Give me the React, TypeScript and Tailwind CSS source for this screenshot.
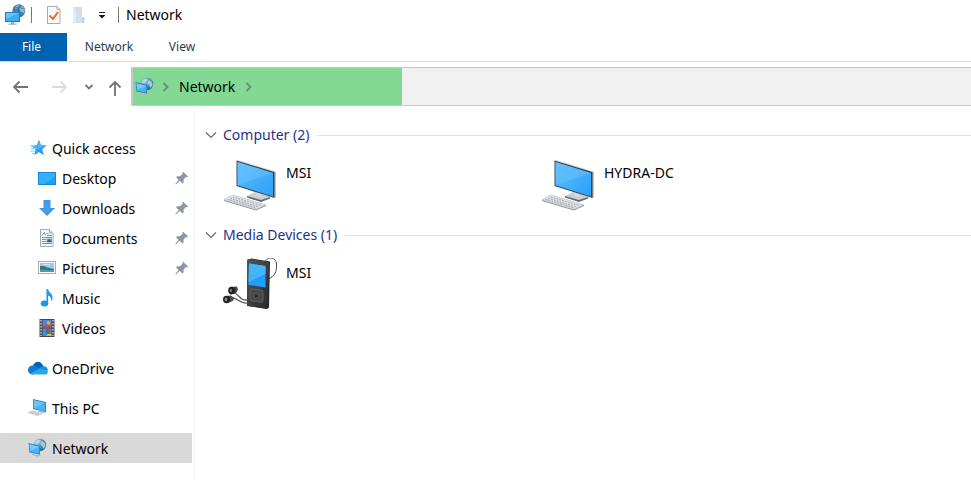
import type { ReactNode } from "react";

function NetworkIcon({ className }: { className: string }) {
  return (
    <svg viewBox="0 0 20 20" className={className} aria-hidden="true">
      <defs>
        <radialGradient id="globe" cx="0.35" cy="0.25" r="0.8">
          <stop offset="0" stopColor="#a9cfe0" />
          <stop offset="0.5" stopColor="#4f92b8" />
          <stop offset="1" stopColor="#2a668f" />
        </radialGradient>
      </defs>
      <circle cx="12" cy="7" r="6.200" fill="url(#globe)" />
      <path d="M7 4l3-2.500 3 1-2 2-2 2-3-.5zM14 3l3 2 .6 3-2 3-1.500-3-1.600-1.500z" fill="#c0e0e9" opacity="0.75" />
      <path d="M5 16l4 1 3-1 1.500 1-4 1.700-6-2z" fill="#b0b8bd" />
      <path d="M.500 5l11.500 3v8.500L1.500 14.500z" fill="#2f7fae" />
      <path d="M1.400 6.200l9.800 2.600v6.700L2.300 13.700z" fill="#45b5fb" />
      <path d="M1.400 6.200l9.800 2.600L2.200 12.700z" fill="#75cbff" />
    </svg>
  );
}

function TitleNetworkIcon() {
  return (
    <svg viewBox="0 0 22 22" className="h-[22px] w-[22px]" aria-hidden="true">
      <circle cx="14.800" cy="6.800" r="6.500" fill="#3f7fa8" />
      <path d="M10 4l3-3 3 0-1 2-3 2zM16 3l3-1 2 4-1 3-3-1-2-3z" fill="#86bdd5" />
      <path d="M9 4q5-2 11.500 1M15 .500v13" stroke="#2c638a" strokeWidth="0.600" fill="none" />
      <rect x="1" y="8" width="15" height="10" fill="#287fb0" />
      <rect x="2" y="9" width="13" height="8" fill="#3aaef2" />
      <path d="M2 9h13L2 15z" fill="#67c5fa" />
      <path d="M7 18h3v1.500h2.500v1.200h-8v-1.200H7z" fill="#8eb4c8" />
    </svg>
  );
}

function CheckDocIcon() {
  return (
    <svg viewBox="0 0 16 20" className="h-5 w-4" aria-hidden="true">
      <path d="M1.500 1.500h9.500l3 3v14h-12.500z" fill="#fafafa" stroke="#a9a9a9" />
      <path d="M11 1.500v3h3" fill="none" stroke="#a9a9a9" />
      <path d="M3.500 10.500l3.500 3.500 5-7" fill="none" stroke="#f26522" strokeWidth="2" />
    </svg>
  );
}

function FolderIcon() {
  return (
    <svg viewBox="0 0 14 18" className="h-[18px] w-[14px]" aria-hidden="true">
      <path d="M1 1h9v10l2 1v5H1z" fill="#d3deed" />
      <path d="M1 1l3 3v13l-3-1z" fill="#e2eaf4" />
      <path d="M10 11h2.500v6H10z" fill="#c5d4e8" />
    </svg>
  );
}

function StarIcon() {
  return (
    <svg viewBox="0 0 18 18" className="h-[18px] w-[18px]" aria-hidden="true">
      <path d="M10 1l2 5.200 5.500.4-4.200 3.700 1.400 6-4.700-3.200-4.800 3.200 1.500-5.700L2 6.700l5.800-.4z" fill="#2d9be8" />
      <path d="M10 1l2 5.200 5.500.4L7 11 3 7l4.800-.7z" fill="#48b2f5" />
      <path d="M1 7h5M2 9.500h5M1 12h5M3 14.500h2" stroke="#8acdf6" />
    </svg>
  );
}

function DesktopIcon() {
  return (
    <svg viewBox="0 0 20 16" className="h-4 w-5" aria-hidden="true">
      <rect x="1" y="2" width="18" height="13" fill="#1684d8" />
      <rect x="2" y="3" width="16" height="11" fill="#16a0fb" />
      <path d="M18 3v4L7 14H2V3z" fill="#36afff" />
    </svg>
  );
}

function DownloadIcon() {
  return (
    <svg viewBox="0 0 18 18" className="h-[18px] w-[18px]" aria-hidden="true">
      <path d="M5.500 1h7v8H17l-8 8-8-8h4.500z" fill="#3c91e2" />
      <path d="M6 1.500h6v8h3.500L9 16 2.500 9.500H6z" fill="#449be8" />
    </svg>
  );
}

function DocumentIcon() {
  return (
    <svg viewBox="0 0 16 18" className="h-[18px] w-4" aria-hidden="true">
      <path d="M1.500.500h9l3.500 3.500v13.500H1.500z" fill="#f8fbfd" stroke="#9eabb5" />
      <path d="M10.500.500v3.500H14" fill="#d9e5ec" stroke="#9eabb5" />
      <path d="M3 6.500L5.500 3.500 6.500 6.500M7.500 4.500h2M8 6.500h5M3 8.500h10M3 10.500h4M3 12.500h4M3 14.500h10" fill="none" stroke="#4ba3ce" />
      <rect x="7.500" y="9.500" width="5.500" height="4" fill="#5fa4cf" />
      <path d="M8 13l2-3 3 3z" fill="#315f7e" />
    </svg>
  );
}

function PictureIcon() {
  return (
    <svg viewBox="0 0 20 16" className="h-4 w-5" aria-hidden="true">
      <rect x="1.500" y="1.500" width="17" height="12" fill="#fff" stroke="#a6acb0" />
      <rect x="3" y="3" width="14" height="9" fill="#8ecdf5" />
      <path d="M3 6l4 0 3 1.500 7 1.500v1.500H3z" fill="#41765e" />
      <path d="M3 9.500l7 .5h7v2H3z" fill="#4a96cd" />
      <path d="M6 4.500h7" stroke="#d8effb" />
    </svg>
  );
}

function MusicIcon() {
  return (
    <svg viewBox="0 0 16 20" className="h-5 w-4" aria-hidden="true">
      <ellipse cx="5.500" cy="15.500" rx="3.800" ry="3" fill="#1298f6" />
      <path d="M7.500 1h1.600c.3 3.500 4.900 4.500 4.400 9-.2 1.300-.7 2.300-1.700 3.500.7-3.500 0-5-2.700-6V15.500H7.500z" fill="#1298f6" />
    </svg>
  );
}

function VideoIcon() {
  return (
    <svg viewBox="0 0 16 18" className="h-[18px] w-4" aria-hidden="true">
      <rect x="0.500" width="15" height="18" fill="#45494c" />
      <path d="M2 1v16M14 1v16" stroke="#e3e3e3" strokeWidth="1.200" strokeDasharray="1.500 1.500" />
      <rect x="3.500" y="1" width="9" height="7.500" fill="#4f87d9" />
      <rect x="3.500" y="9.500" width="9" height="7.500" fill="#438ce0" />
      <path d="M3.500 7.500l3-2.500 2 1 4-2v3l-4 1.500z" fill="#d64c33" />
      <circle cx="9.500" cy="4" r="1.700" fill="#e7b53b" />
      <path d="M7 10h4v3l-2 2-2-2z" fill="#3c7e45" />
      <path d="M8 10.500h3v2H8z" fill="#d94a35" />
      <path d="M9 15h3.500v2H7z" fill="#e3bc3e" />
    </svg>
  );
}

function CloudIcon() {
  return (
    <svg viewBox="0 0 20 14" className="h-[14px] w-5" aria-hidden="true">
      <path d="M5 5C6 1 11-1 14 3q1 1 1.300 2.500L11 9z" fill="#0364b8" />
      <path d="M5 4.500C2 4.500 0 6.500 0 9c0 2.500 2 4.500 4.500 4.500L14 9 8 5.300Q6.500 4.400 5 4.500z" fill="#0f78d4" />
      <path d="M11 7l3-1.500c3-1.200 6 1 6 4L14 10z" fill="#1490df" />
      <path d="M2 12.500L12 7.500l7.500 2.200c1.200 1.500-.3 3.800-2.800 3.800H4.500z" fill="#28a8ea" />
    </svg>
  );
}

function ThisPcIcon() {
  return (
    <svg viewBox="0 0 20 18" className="h-[18px] w-5" aria-hidden="true">
      <path d="M5 0l13 3v10.500L5 10z" fill="#507d9b" />
      <path d="M5.800 1.300l11.300 2.600v8.300L5.800 9.200z" fill="#42b3fd" />
      <path d="M5.800 1.300l11.300 2.600L5.800 9.200z" fill="#68c4fc" />
      <path d="M9 12.500l3-1 5 1.500-2 1.500z" fill="#b9c2c9" />
      <path d="M0 13.500L4.500 11.800l9 3-4 2z" fill="#d4d8dc" stroke="#b4bac0" strokeWidth="0.500" />
      <path d="M2.500 13.500l8 2.500M4.500 12.500l8 2.500" stroke="#a7afb5" strokeWidth="0.500" strokeDasharray="1 0.500" />
    </svg>
  );
}

function PinIcon() {
  return (
    <svg viewBox="0 0 14 14" className="h-[14px] w-[14px]" role="img" aria-label="Pinned">
      <path d="M8 .8L13.200 5.500l-1.300.8-1-.3-2.400 2.700.2 2.600-1.200 1.100-2.800-2.700L1 13.500l-.7-.6 3.300-4L1 6.200l1.200-1 2.700.1 2.800-2.500-.4-1.200z" fill="#8b98a3" />
    </svg>
  );
}

function ChevronDown() {
  return (
    <svg viewBox="0 0 12 12" className="h-3 w-3" aria-hidden="true">
      <path d="M1 3.500l5 5 5-5" fill="none" stroke="#6b6b6b" strokeWidth="1.200" />
    </svg>
  );
}

function ChevronRight() {
  return (
    <svg viewBox="0 0 8 10" className="h-[10px] w-2 shrink-0" aria-hidden="true">
      <path d="M1.500 1l4 4-4 4" fill="none" stroke="#738777" strokeWidth="1.800" />
    </svg>
  );
}

function ComputerIcon() {
  return (
    <svg viewBox="0 0 56 54" className="h-[54px] w-14 shrink-0" aria-hidden="true">
      <defs>
        <linearGradient id="screen" x1="0" y1="0" x2="1" y2="1">
          <stop offset="0" stopColor="#5fc0ff" />
          <stop offset="1" stopColor="#2b9ff8" />
        </linearGradient>
      </defs>
      <path d="M24 38l8-4 16 5-2 2-8 2z" fill="#c9d0d5" />
      <path d="M24 38l14 4 9-3v1.500L38 44l-14-4.500z" fill="#606b73" />
      <path d="M33 32l5 1v6l-5-1.500z" fill="#d5dde2" />
      <path d="M50.500 14.500l2.500-1v26l-2.500.5z" fill="#b8c3ca" />
      <path d="M13.500 2.500l2-.5L53 13.500l-2 .8z" fill="#d7e0e5" />
      <path d="M13.500 2.500L51.500 14v26l-38-12z" fill="#38444d" />
      <path d="M14.500 4L50 15v23.500L14.500 27.200z" fill="url(#screen)" />
      <path d="M14.500 27.200V4L50 15 34 20.500z" fill="#6dc7ff" opacity="0.4" />
      <path d="M1 41.500l9-4.500 33 10-10 4z" fill="#e5e8eb" stroke="#b7bdc2" strokeWidth="0.700" />
      <path d="M1 42l32 9.500 10-4.500v1l-10 4.500L1 43z" fill="#8c959c" />
      <path d="M4.500 41.300l28 8.400M7 40.300l28 8.400M9.500 39l29 8.500" stroke="#a6aeb4" strokeWidth="1.200" strokeDasharray="2 1" />
    </svg>
  );
}

function MediaPlayerIcon() {
  return (
    <svg viewBox="1 3 56 54" className="h-[54px] w-14 shrink-0" aria-hidden="true">
      <defs>
        <linearGradient id="body" x1="0" y1="0" x2="1" y2="1">
          <stop offset="0" stopColor="#555" />
          <stop offset="1" stopColor="#292929" />
        </linearGradient>
      </defs>
      <path d="M43 11V9C43 1 54 1 54.500 9c.5 8-2 12-8 15" fill="none" stroke="#4a4a4a" strokeWidth="1" />
      <path d="M12 38c6 1 5 8 13 7M6 44c9-4 10 5 19 4" fill="none" stroke="#555" strokeWidth="1.200" />
      <path d="M26 5l3-1.500 19 3-1 46-2 1.500L25 51z" fill="#252525" />
      <path d="M25 5.500q0-2 2-1.500l18 2.500q2 .3 2 2.300L46 52q-.2 2-2 1.700L26.500 51q-1.500-.3-1.500-2z" fill="url(#body)" />
      <path d="M27 8.500L43.500 11v21.500L26.500 30z" fill="#1ca0ff" />
      <path d="M27 8.500L43.500 11v8L26.500 27z" fill="#44b4ff" />
      <path d="M28 35.500q0-2 2-1.700l9 1.400q2 .4 2 2.300v8q0 2-2 1.700l-9-1.500q-2-.3-2-2.300z" fill="#484848" stroke="#606060" />
      <path d="M32.500 38l5 3-5 3z" fill="#252525" stroke="#777" strokeWidth="0.500" />
      <path d="M8 32l7-.5 1 3-2 4-6 1z" fill="#484848" />
      <ellipse cx="9.500" cy="35.500" rx="3.300" ry="3.700" fill="#202020" />
      <ellipse cx="9" cy="35.500" rx="1.200" ry="1.700" fill="#777" />
      <path d="M4 41l5-.5 3 2.500-1 3-5 2z" fill="#4c4c4c" />
      <ellipse cx="4.500" cy="44.500" rx="3.500" ry="3.700" fill="#202020" />
      <ellipse cx="4" cy="44.500" rx="1.300" ry="1.900" fill="#888" />
    </svg>
  );
}

type NavItem = { label: string; icon: ReactNode; pinned?: boolean };

const quickItems: NavItem[] = [
  { label: "Desktop", icon: <DesktopIcon />, pinned: true },
  { label: "Downloads", icon: <DownloadIcon />, pinned: true },
  { label: "Documents", icon: <DocumentIcon />, pinned: true },
  { label: "Pictures", icon: <PictureIcon />, pinned: true },
  { label: "Music", icon: <MusicIcon /> },
  { label: "Videos", icon: <VideoIcon /> },
];

function RootLink({ label, icon, current }: NavItem & { current?: boolean }) {
  return (
    <a
      href="#"
      aria-current={current ? "page" : undefined}
      className={`flex h-[30px] items-center gap-1 pl-7 ${current ? "bg-[#d9d9d9]" : ""}`}
    >
      <span className="-ml-px flex w-[21px] justify-center">{icon}</span>
      <span className="pt-0.5">{label}</span>
    </a>
  );
}

function Group({ title, children }: { title: string; children: ReactNode }) {
  return (
    <section className="h-[100px]">
      <div className="flex h-[30px] items-center">
        <button type="button" className="flex items-center gap-1.5 text-[#1e3287]">
          <ChevronDown />
          {title}
        </button>
        <span className="ml-2 h-px flex-1 bg-[#e2e2e2]" />
      </div>
      <div className="grid grid-cols-[318px_318px] pl-[18px]">{children}</div>
    </section>
  );
}

function Device({ name, icon }: { name: string; icon: ReactNode }) {
  return (
    <a href="#" className="flex h-[70px] items-center gap-[7px]">
      {icon}
      <span className="h-11 leading-5">{name}</span>
    </a>
  );
}

export default function App() {
  return (
    <div className="flex min-h-screen flex-col bg-white font-['Noto_Sans','Open_Sans',sans-serif] text-sm text-black">
      <header className="flex h-[33px] items-center pb-[3px] pl-1">
        <TitleNetworkIcon />
        <span className="ml-[5px] h-4 w-px bg-[#777]" />
        <button type="button" aria-label="Properties" className="ml-3.5">
          <CheckDocIcon />
        </button>
        <button type="button" aria-label="New folder" className="ml-2.5">
          <FolderIcon />
        </button>
        <button type="button" aria-label="Customize toolbar" className="ml-3">
          <svg viewBox="0 0 8 8" className="h-2 w-2" aria-hidden="true">
            <path d="M1 1.500h6" stroke="#222" />
            <path d="M.500 4h7L4 7.500z" fill="#111" />
          </svg>
        </button>
        <span className="ml-3 h-4 w-px bg-[#777]" />
        <h1 className="ml-[7px]">Network</h1>
      </header>

      <nav aria-label="Ribbon" className="flex h-[29px] border-b border-[#dadada] text-xs text-[#2b3b4d]">
        <button type="button" className="w-[67px] bg-[#0063b1] pr-1 text-white">File</button>
        <button type="button" className="w-[84px]">Network</button>
        <button type="button" className="w-[62px]">View</button>
      </nav>

      <div className="flex pt-[5px]">
        <div className="flex w-[131px] shrink-0 items-center pl-3">
          <button type="button" aria-label="Back">
            <svg viewBox="0 0 16 14" className="h-3.5 w-4" aria-hidden="true">
              <path d="M16 7H2M7.500 1.500L2 7l5.500 5.500" fill="none" stroke="#747474" strokeWidth="1.800" />
            </svg>
          </button>
          <button type="button" aria-label="Forward" className="ml-6">
            <svg viewBox="0 0 16 14" className="h-3.5 w-4" aria-hidden="true">
              <path d="M0 7h14M8.500 1.500L14 7l-5.500 5.500" fill="none" stroke="#dcdcdc" strokeWidth="1.800" />
            </svg>
          </button>
          <button type="button" aria-label="Recent locations" className="ml-4">
            <svg viewBox="0 0 10 8" className="h-2 w-2.5" aria-hidden="true">
              <path d="M1.500 2L5 5.500 8.500 2" fill="none" stroke="#777" strokeWidth="1.800" />
            </svg>
          </button>
          <button type="button" aria-label="Up" className="ml-3.5 pt-0.5">
            <svg viewBox="0 0 14 16" className="h-4 w-3.5" aria-hidden="true">
              <path d="M7 16V2M1.500 7.500L7 2l5.500 5.500" fill="none" stroke="#747474" strokeWidth="1.800" />
            </svg>
          </button>
        </div>
        <div className="flex h-[39px] min-w-0 flex-1 border-y border-l-2 border-[#c8c8c8] bg-[#f0f0f0]">
          <div className="flex w-[269px] items-center bg-[#83d893]">
            <span className="pl-0.5"><NetworkIcon className="h-5 w-5 shrink-0" /></span>
            <span className="ml-[7px]"><ChevronRight /></span>
            <a href="#" className="mr-2.5 ml-[9px]">Network</a>
            <ChevronRight />
          </div>
        </div>
      </div>

      <div className="flex flex-1">
        <aside className="w-[195px] shrink-0 border-r border-[#f3f3f3] pt-[27px] pr-0.5">
          <RootLink label="Quick access" icon={<StarIcon />} />
          <ul>
            {quickItems.map((item) => (
              <li key={item.label}>
                <a href="#" className="flex h-[30px] items-center gap-[5px] pr-[3px] pl-[37px]">
                  <span className="flex w-5 justify-center">{item.icon}</span>
                  <span className="flex-1 pt-0.5">{item.label}</span>
                  {item.pinned && <PinIcon />}
                </a>
              </li>
            ))}
          </ul>
          <div className="flex flex-col gap-2.5 pt-2.5">
            <RootLink label="OneDrive" icon={<CloudIcon />} />
            <RootLink label="This PC" icon={<ThisPcIcon />} />
            <RootLink label="Network" icon={<NetworkIcon className="h-5 w-5" />} current />
          </div>
        </aside>
        <main className="min-w-0 flex-1 pt-3.5 pl-2.5">
          <Group title="Computer (2)">
            <Device name="MSI" icon={<ComputerIcon />} />
            <Device name="HYDRA-DC" icon={<ComputerIcon />} />
          </Group>
          <Group title="Media Devices (1)">
            <Device name="MSI" icon={<MediaPlayerIcon />} />
          </Group>
        </main>
      </div>
    </div>
  );
}
